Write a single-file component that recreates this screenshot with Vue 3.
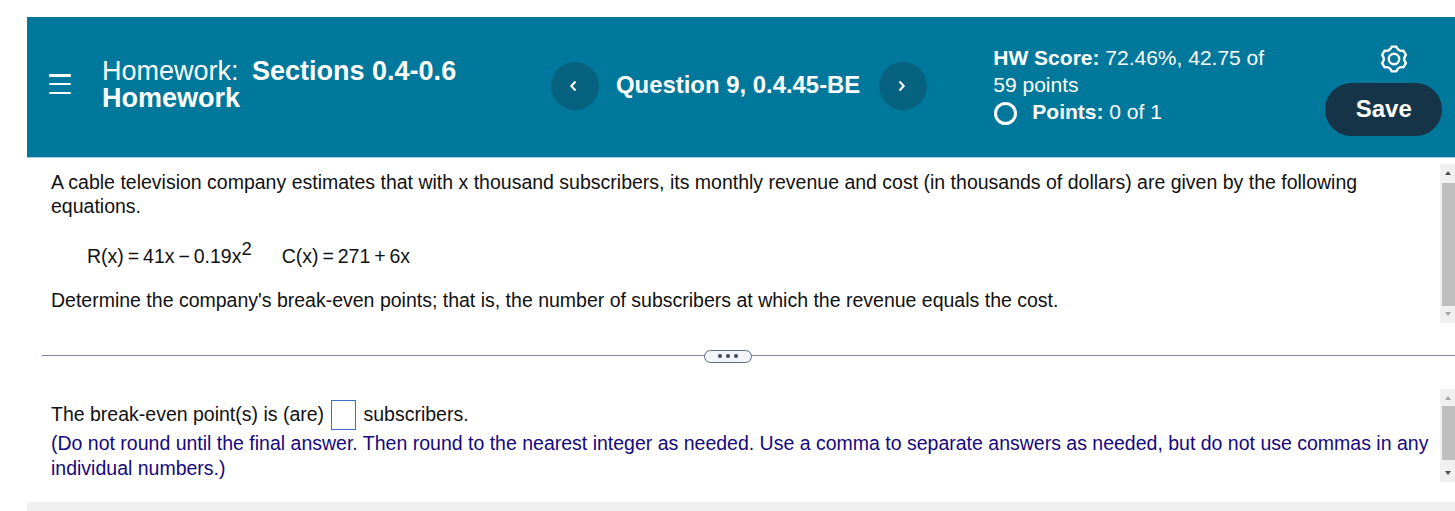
<script setup>
const answerHint = '(Do not round until the final answer. Then round to the nearest integer as needed. Use a comma to separate answers as needed, but do not use commas in any individual numbers.)'

// six rounded lobes around the centre of a 26x28 box
const polar = (deg, r) => {
  const a = (deg * Math.PI) / 180
  return `${(13 + r * Math.sin(a)).toFixed(2)} ${(14 - r * Math.cos(a)).toFixed(2)}`
}
const gearPath = [0, 60, 120, 180, 240, 300]
  .map((a, i) => `${i ? 'L' : 'M'}${polar(a - 11, 12.6)} L${polar(a + 11, 12.6)} Q${polar(a + 30, 8.4)} ${polar(a + 49, 12.6)}`)
  .join(' ') + ' Z'
</script>

<template>
  <div class="page">
    <header class="top-bar">
      <button class="menu-btn" aria-label="Menu">
        <span></span><span></span><span></span>
      </button>
      <h1 class="title"><span class="title-label">Homework:</span> <b>Sections 0.4-0.6 Homework</b></h1>
      <nav class="question-nav">
        <button class="round-btn" aria-label="Previous">
          <svg width="12" height="14" viewBox="0 0 12 14"><path d="M6.500 2.500 2.300 7 6.500 11.500" fill="none" stroke="#fff" stroke-width="2"/></svg>
        </button>
        <span class="question-name">Question 9, 0.4.45-BE</span>
        <button class="round-btn" aria-label="Next">
          <svg width="12" height="14" viewBox="0 0 12 14"><path d="M2.500 2.500 6.700 7 2.500 11.500" fill="none" stroke="#fff" stroke-width="2"/></svg>
        </button>
      </nav>
      <div class="score">
        <div class="score-line"><b>HW Score:</b> 72.46%, 42.75 of 59 points</div>
        <div class="points"><span class="ring"></span><span><b>Points:</b> 0 of 1</span></div>
      </div>
      <div class="actions">
        <svg class="gear" width="26" height="28" viewBox="0 0 26 28" fill="none" stroke="#fff" stroke-width="2.400" stroke-linejoin="round">
          <path :d="gearPath"/>
          <circle cx="13" cy="14" r="5.200"/>
        </svg>
        <button class="save-btn">Save</button>
      </div>
    </header>

    <section class="pane pane-top">
      <div class="pane-text">
        <p class="intro">A cable television company estimates that with x thousand subscribers, its monthly revenue and cost (in thousands of dollars) are given by the following equations.</p>
        <p class="formula">
          <span>R(x) = 41x − 0.19x<sup>2</sup></span>
          <span>C(x) = 271 + 6x</span>
        </p>
        <p class="task">Determine the company's break-even points; that is, the number of subscribers at which the revenue equals the cost.</p>
      </div>
      <div class="scrollbar scrollbar-top">
        <i class="arrow up dark"></i>
        <div class="thumb"></div>
        <i class="arrow down light"></i>
      </div>
    </section>

    <div class="divider">
      <span class="dots-btn"><i></i><i></i><i></i></span>
    </div>

    <section class="pane pane-bottom">
      <div class="pane-text">
        <p class="answer">The break-even point(s) is (are) <span class="answer-box"></span> subscribers.</p>
        <p class="hint">{{ answerHint }}</p>
      </div>
      <div class="scrollbar scrollbar-bottom">
        <i class="arrow up light"></i>
        <div class="thumb"></div>
        <i class="arrow down dark"></i>
      </div>
    </section>

    <div class="footer-bar"></div>
  </div>
</template>

<style>
html, body {
  margin: 0;
  background: #fff;
  overflow: hidden;
}
</style>

<style scoped>
.page {
  height: 511px;
  padding: 17px 0 0 27px;
  box-sizing: border-box;
  display: flex;
  flex-direction: column;
  font-family: "Liberation Sans", Arial, sans-serif;
  color: #111;
  overflow: hidden;
}

p {
  margin: 0;
}

.top-bar {
  height: 141px;
  flex: none;
  box-sizing: border-box;
  display: flex;
  background: #00789c;
  border-bottom: 1px solid #9fd0e0;
  color: #fff;
}

.menu-btn {
  width: 22px;
  height: 20px;
  margin: 57px 0 0 22px;
  padding: 0;
  border: 0;
  background: none;
  display: flex;
  flex-direction: column;
  justify-content: space-between;
}

.menu-btn span {
  height: 2.500px;
  background: #fff;
  border-radius: 1px;
}

.title {
  width: 400px;
  margin: 41px 0 0 31px;
  font-size: 27px;
  line-height: 27px;
  font-weight: 400;
}

.title-label {
  margin-right: 6px;
}

.question-nav {
  display: flex;
  align-items: center;
  gap: 17px;
  height: 48px;
  margin: 45px 0 0 49px;
}

.round-btn {
  width: 48px;
  height: 48px;
  padding: 0;
  border: 0;
  border-radius: 50%;
  background: #07627f;
  display: flex;
  align-items: center;
  justify-content: center;
}

.question-name {
  font-size: 23.900px;
  font-weight: 700;
  white-space: nowrap;
  margin: 0 2px 2px 0;
}

.score {
  width: 301px;
  margin: 27px 0 0 66px;
  font-size: 21px;
  line-height: 27px;
}

.score-line {
  width: 290px;
}

.points {
  display: flex;
  align-items: center;
  gap: 15px;
}

.ring {
  width: 23px;
  height: 23px;
  box-sizing: border-box;
  border: 3px solid #fff;
  border-radius: 50%;
  margin: 4px 0 0 1px;
}

.actions {
  margin-left: 31px;
  display: flex;
  flex-direction: column;
  align-items: center;
}

.gear {
  margin: 28px 0 0 21px;
  overflow: visible;
}

.save-btn {
  width: 117px;
  height: 53px;
  margin-top: 10px;
  padding-bottom: 3px;
  border: 0;
  border-radius: 27px;
  background: #163447;
  color: #fff;
  font: 700 24px "Liberation Sans", Arial, sans-serif;
}

.pane {
  display: flex;
}

.pane-text {
  flex: 1;
  padding-left: 24px;
  font-size: 19.500px;
  line-height: 25px;
}

.pane-top {
  height: 165px;
  flex: none;
}

.intro {
  padding-top: 12px;
  width: 1330px;
  line-height: 24px;
}

.formula {
  margin-top: 26px;
  padding-left: 36px;
  display: flex;
  gap: 29px;
  word-spacing: -1.500px;
}

sup {
  font-size: 18.500px;
  line-height: 0;
  vertical-align: 8px;
  margin-right: 1px;
}

.task {
  margin-top: 19px;
}

.scrollbar {
  width: 15px;
  flex: none;
  background: #f0f0f0;
  display: flex;
  flex-direction: column;
  align-items: center;
}

.scrollbar-top {
  height: 159px;
  margin-top: 6px;
}

.scrollbar-bottom {
  height: 93px;
}

.thumb {
  width: 13px;
  margin-left: 2px;
  background: #bfbfbf;
  flex: 1;
}

.arrow {
  flex: none;
  height: 19px;
  width: 15px;
  position: relative;
}

.arrow.down,
.scrollbar-bottom .arrow.up {
  height: 17px;
}

.scrollbar-bottom .arrow.down {
  height: 22px;
}

.arrow::after {
  content: "";
  position: absolute;
  left: 5px;
  top: 7px;
  border-left: 3.500px solid transparent;
  border-right: 3.500px solid transparent;
}

.arrow.down::after {
  top: 6px;
}

.scrollbar-bottom .arrow.down::after {
  top: 11px;
}

.arrow.up::after {
  border-bottom: 4px solid var(--arrow);
}

.arrow.down::after {
  border-top: 4px solid var(--arrow);
}

.arrow.dark {
  --arrow: #505050;
}

.arrow.light {
  --arrow: #a3a3a3;
}

.divider {
  flex: none;
  height: 14px;
  margin: 26px 0 0 15px;
  display: flex;
  align-items: center;
  justify-content: center;
  position: relative;
  padding-right: 41px;
}

.divider::before {
  content: "";
  position: absolute;
  left: 0;
  right: 0;
  top: 6px;
  height: 1px;
  background: #7c8798;
}

.dots-btn {
  position: relative;
  width: 48px;
  height: 13px;
  box-sizing: border-box;
  border: 1px solid #5c6b7d;
  border-radius: 7px;
  background: #f1f4f8;
  display: flex;
  align-items: center;
  justify-content: center;
  gap: 4px;
}

.dots-btn i {
  width: 4px;
  height: 4px;
  border-radius: 50%;
  background: #3f4a59;
}

.pane-bottom {
  margin-top: 26px;
  height: 93px;
  flex: none;
}

.answer {
  padding-top: 11px;
  line-height: 28px;
}

.answer-box {
  display: inline-block;
  width: 25px;
  height: 30px;
  box-sizing: border-box;
  border: 1px solid #3b6fc9;
  vertical-align: -9px;
  margin: 0 2px 0 1.500px;
}

.hint {
  width: 1385px;
  color: #16087d;
  margin-top: 1px;
}

.footer-bar {
  margin-top: auto;
  height: 9px;
  flex: none;
  background: #f0f0f0;
}
</style>
